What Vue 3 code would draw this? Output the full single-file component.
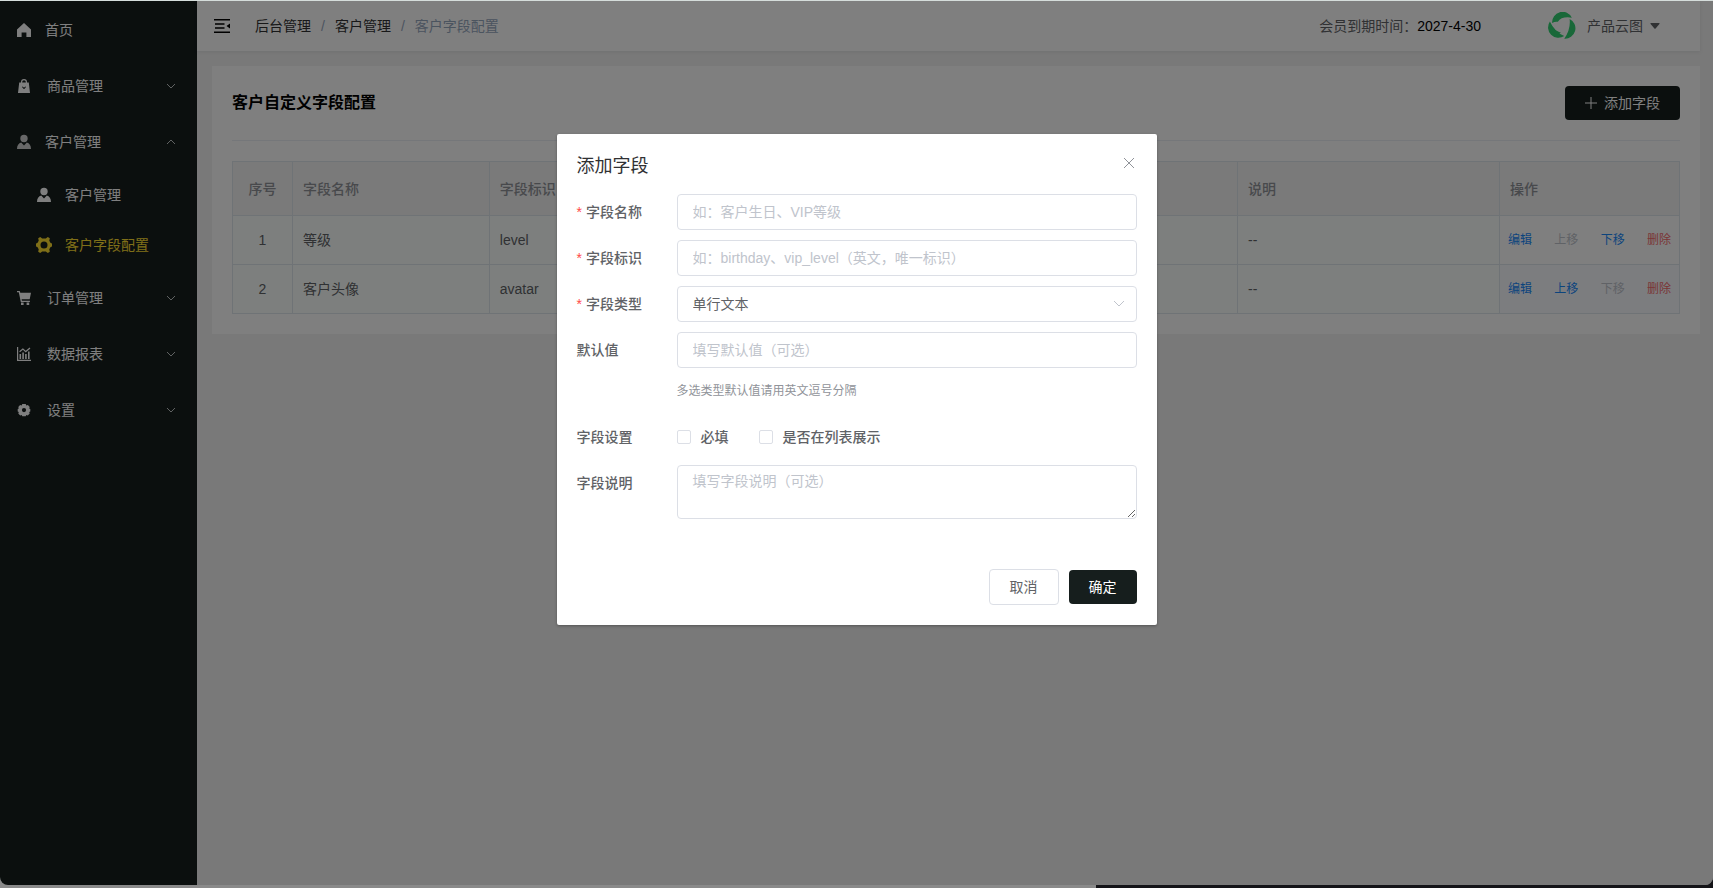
<script setup>
import { reactive, ref } from "vue";

const menus = [
  { name: "首页", icon: "home" },
  { name: "商品管理", icon: "bag", wide: true, arrow: true },
  {
    name: "客户管理",
    icon: "user",
    arrow: true,
    open: true,
    children: [
      { name: "客户管理", icon: "user" },
      { name: "客户字段配置", icon: "cog", active: true },
    ],
  },
  { name: "订单管理", icon: "cart", wide: true, arrow: true },
  { name: "数据报表", icon: "chart", wide: true, arrow: true },
  { name: "设置", icon: "gear", wide: true, arrow: true },
];

const icons = {
  home: "M8 1 1 7.4V15h4.6v-4.6h4.8V15H15V7.4z",
  bag: "M5 4.500V4a3 3 0 0 1 6 0v.5h1.800L14 15H2L3.200 4.500zM6.200 4.500h3.600V4a1.800 1.800 0 0 0-3.600 0zM6 9l2 2.200L10 9l-.7-.6L8 9.800 6.700 8.400z",
  user: "M8 .8a3.700 3.700 0 1 1 0 7.400 3.700 3.700 0 0 1 0-7.400zM5.200 8.600 8 11.500l2.800-2.900c2.600.7 4.200 3 4.200 6.400H1c0-3.400 1.600-5.700 4.200-6.400z",
  cog: "M4.200 0 6.200 1.600h3.600L11.800 0l2 1.200-.5 2.500 1.300 2.300 1.400.6v2.800l-1.400.6-1.300 2.300.5 2.500-2 1.200-2-1.600H6.200L4.200 16l-2-1.200.5-2.500L1.400 10 0 9.400V6.600L1.400 6l1.300-2.300-.5-2.500zM8 4.500a3.500 3.500 0 1 0 0 7 3.500 3.500 0 0 0 0-7z",
  cart: "M1 1h2.700l.6 1.800H15l-1.300 6.400H5.600l.3 1.500h8V12H4.800L2.800 2.300H1zM5 12.600h2.600V15H5zM10.600 12.600h2.600V15h-2.600z",
  chart: "M1 1h1.200v12.800H15V15H1zM3.500 8h1.600v5H3.500zM6.300 6.400h1.600V13H6.300zM9.100 8h1.600v5H9.100zM12 5.400h1.600V13H12zM3.200 5.200l3.700-3L9.700 4.800l3.900-3.300.8.900-4.700 4L6.900 3.800 4 6.200z",
  gear: "M6.300 2h3.400l.6 1.500 1.600-.4 1.800 1.900-.5 1.400 1.100.6v2.500l-1.100.6.5 1.400-1.900 1.900-1.500-.4-.6 1.300H6.300l-.6-1.300-1.500.4-1.900-1.900.5-1.400-1.100-.6V7l1.100-.6L2.300 5l1.800-1.900 1.600.4zM8 6a2.100 2.100 0 1 0 0 4.200A2.100 2.100 0 0 0 8 6z",
};

const rows = [
  { id: 1, name: "等级", key: "level", remark: "--" },
  { id: 2, name: "客户头像", key: "avatar", remark: "--" },
];

const dialogVisible = ref(true);
const form = reactive({
  name: "",
  key: "",
  type: "单行文本",
  defaultValue: "",
  required: false,
  showInList: false,
  remark: "",
});
</script>

<template>
  <div class="screen">
    <div class="window">
      <nav class="sidebar">
        <template v-for="menu in menus" :key="menu.name">
          <a href="#" class="menu-item" :class="{ wide: menu.wide, opened: menu.open }">
            <svg class="menu-icon" viewBox="0 0 16 16" aria-hidden="true">
              <path :d="icons[menu.icon]" fill-rule="evenodd" />
            </svg>
            <span>{{ menu.name }}</span>
            <svg v-if="menu.arrow" class="menu-arrow" viewBox="0 0 10 10" aria-hidden="true">
              <path :d="menu.open ? 'M1 7l4-4 4 4' : 'M1 3l4 4 4-4'" />
            </svg>
          </a>
          <a
            v-for="child in menu.children"
            :key="child.name"
            href="#"
            class="menu-item sub"
            :class="{ active: child.active }"
          >
            <svg class="menu-icon" viewBox="0 0 16 16" aria-hidden="true">
              <path :d="icons[child.icon]" fill-rule="evenodd" />
            </svg>
            <span>{{ child.name }}</span>
          </a>
        </template>
      </nav>

      <div class="main">
        <header class="navbar">
          <button class="fold" type="button" aria-label="menu">
            <svg viewBox="0 0 16 14" aria-hidden="true">
              <path d="M0 0h16v1.500H0zM1 4.200h9.500v1.500H1zM1 8.300h9.500v1.500H1zM0 12.500h16V14H0zM16 4.500v5L12.500 7z" />
            </svg>
          </button>
          <div class="breadcrumb">
            <a href="#">后台管理</a>
            <i>/</i>
            <a href="#">客户管理</a>
            <i>/</i>
            <span>客户字段配置</span>
          </div>
          <div class="expire">会员到期时间：<b>2027-4-30</b></div>
          <button class="account" type="button">
            <svg class="logo" viewBox="0 0 27 27" aria-hidden="true">
              <path d="M4 10.500A10 10 0 0 1 23 5.500Q13 4 9.500 9.500Q7 9 4 10.500z" />
              <path transform="rotate(120 13.500 13.500)" d="M4 10.500A10 10 0 0 1 23 5.500Q12 4.500 4 10.500z" />
              <path transform="rotate(240 13.500 13.500)" d="M4 10.500A10 10 0 0 1 23 5.500Q12 4.500 4 10.500z" />
              <path d="M6 17l1.500 5.500 5-2.500z" />
            </svg>
            <span>产品云图</span>
            <svg class="caret" viewBox="0 0 10 6" aria-hidden="true">
              <path d="M1 0h8q1 0 .4.900L5.600 5.500q-.6.700-1.200 0L.6.900Q0 0 1 0z" />
            </svg>
          </button>
        </header>

        <section class="card">
          <div class="card-header">
            <h1>客户自定义字段配置</h1>
            <button class="btn primary add" type="button" @click="dialogVisible = true">
              <svg viewBox="0 0 12 12" aria-hidden="true"><path d="M6 0v12M0 6h12" /></svg>
              添加字段
            </button>
          </div>
          <table>
            <colgroup>
              <col class="col-index" />
              <col class="col-name" />
              <col class="col-name" />
              <col />
              <col class="col-remark" />
              <col class="col-action" />
            </colgroup>
            <thead>
              <tr>
                <th class="center">序号</th>
                <th>字段名称</th>
                <th>字段标识</th>
                <th></th>
                <th>说明</th>
                <th>操作</th>
              </tr>
            </thead>
            <tbody>
              <tr v-for="(row, index) in rows" :key="row.id">
                <td class="center">{{ row.id }}</td>
                <td>{{ row.name }}</td>
                <td>{{ row.key }}</td>
                <td></td>
                <td>{{ row.remark }}</td>
                <td class="action-cell">
                  <div class="actions">
                    <button type="button">编辑</button>
                    <button type="button" :disabled="index === 0">上移</button>
                    <button type="button" :disabled="index === rows.length - 1">下移</button>
                    <button type="button" class="danger">删除</button>
                  </div>
                </td>
              </tr>
            </tbody>
          </table>
        </section>
      </div>

      <div v-if="dialogVisible" class="mask">
        <form class="dialog" role="dialog" aria-labelledby="dialog-title" @submit.prevent>
          <div class="dialog-header">
            <h2 id="dialog-title">添加字段</h2>
            <button class="close" type="button" aria-label="close" @click="dialogVisible = false">
              <svg viewBox="0 0 10 10" aria-hidden="true"><path d="M0 0l10 10M10 0L0 10" /></svg>
            </button>
          </div>

          <div class="form-item">
            <label class="label required" for="name">字段名称</label>
            <input id="name" v-model="form.name" class="control" type="text" placeholder="如：客户生日、VIP等级" />
          </div>
          <div class="form-item">
            <label class="label required" for="key">字段标识</label>
            <input id="key" v-model="form.key" class="control" type="text" placeholder="如：birthday、vip_level（英文，唯一标识）" />
          </div>
          <div class="form-item">
            <label class="label required" for="type">字段类型</label>
            <div class="select">
              <select id="type" v-model="form.type" class="control">
                <option>单行文本</option>
              </select>
              <svg viewBox="0 0 12 12" aria-hidden="true"><path d="M1 3l5 5 5-5" /></svg>
            </div>
          </div>
          <div class="form-item">
            <label class="label" for="default-value">默认值</label>
            <input id="default-value" v-model="form.defaultValue" class="control" type="text" placeholder="填写默认值（可选）" />
          </div>
          <p class="hint">多选类型默认值请用英文逗号分隔</p>
          <div class="form-item">
            <span class="label">字段设置</span>
            <div class="checks">
              <label><input v-model="form.required" type="checkbox" />必填</label>
              <label><input v-model="form.showInList" type="checkbox" />是否在列表展示</label>
            </div>
          </div>
          <div class="form-item">
            <label class="label" for="remark">字段说明</label>
            <textarea id="remark" v-model="form.remark" class="control" rows="2" placeholder="填写字段说明（可选）"></textarea>
          </div>

          <div class="dialog-footer">
            <button class="btn plain" type="button" @click="dialogVisible = false">取消</button>
            <button class="btn primary" type="submit">确定</button>
          </div>
        </form>
      </div>
    </div>
  </div>
</template>

<style>
body {
  margin: 0;
  font-family: "Liberation Sans", "Noto Sans CJK SC", sans-serif;
  font-size: 14px;
  line-height: 20px;
}
</style>

<style scoped>
* {
  box-sizing: border-box;
}

button,
input,
select,
textarea {
  font: inherit;
}

button {
  border: 0;
  background: none;
  padding: 0;
  cursor: pointer;
}

a {
  color: inherit;
  text-decoration: none;
}

.screen {
  height: 100vh;
  padding: 1px 0 3px;
  background:
    linear-gradient(#d5dddb, #d5dddb) top / 100% 1px no-repeat,
    linear-gradient(90deg, #8a8a8a 64%, #141418 64%);
}

.window {
  position: relative;
  display: flex;
  height: 100%;
  overflow: hidden;
  border-radius: 0 0 8px 8px;
  background: #f2f2f2;
}

/* Sidebar */
.sidebar {
  flex: none;
  width: 197px;
  padding-top: 1px;
  background: #161e1d;
  color: #fff;
}

.menu-item {
  display: flex;
  align-items: center;
  gap: 13px;
  height: 56px;
  padding: 0 21px 0 16px;
}

.menu-item.wide {
  gap: 15px;
}

.menu-item.sub {
  height: 50px;
  padding-left: 36px;
}

.menu-item.active {
  color: #ffdf30;
}

.menu-icon {
  width: 16px;
  height: 16px;
  fill: currentColor;
}

.opened .menu-icon {
  fill: #d0d0d0;
}

.menu-arrow {
  width: 10px;
  height: 10px;
  margin-left: auto;
  fill: none;
  stroke: #c0c4c4;
}

/* Top bar */
.main {
  flex: 1;
  min-width: 0;
  padding-right: 13px;
}

.navbar {
  display: flex;
  align-items: center;
  height: 50px;
  padding: 0 40px 0 17px;
  background: #fff;
  box-shadow: 0 1px 4px rgba(0, 21, 41, 0.08);
  color: #606266;
}

.fold svg {
  display: block;
  width: 16px;
  height: 14px;
}

.breadcrumb {
  display: flex;
  gap: 10px;
  margin: 0 auto 0 25px;
  color: #303133;
}

.breadcrumb span {
  color: #97a8be;
}

.breadcrumb i {
  color: #97a8be;
  font-style: normal;
}

.expire b {
  color: #000;
  font-weight: normal;
}

.account {
  display: flex;
  align-items: center;
  gap: 7px;
  margin-left: 67px;
  color: #606266;
}

.logo {
  width: 28px;
  height: 28px;
  margin-right: 4px;
  fill: #32d072;
}

.caret {
  width: 10px;
  height: 6px;
  fill: #606266;
}

/* Field list */
.card {
  margin: 15px 0 0 15px;
  padding: 20px;
  background: #fff;
}

.card-header {
  display: flex;
  align-items: center;
  justify-content: space-between;
  margin-bottom: 20px;
  padding-bottom: 20px;
  border-bottom: 1px solid #ebeef5;
}

h1 {
  margin: 0;
  font-size: 16px;
  font-weight: bold;
  line-height: 26px;
}

.btn {
  height: 34px;
  padding: 0 20px;
  border-radius: 4px;
}

.btn.primary {
  background: #161e1d;
  color: #fff;
}

.btn.plain {
  height: 36px;
  border: 1px solid #dcdfe6;
  color: #606266;
}

.btn.add {
  display: flex;
  align-items: center;
  gap: 7px;
}

.btn.add svg {
  width: 12px;
  height: 12px;
  stroke: #fff;
}

table {
  width: 100%;
  table-layout: fixed;
  border-collapse: collapse;
  color: #606266;
}

.col-index {
  width: 60px;
}

.col-name {
  width: 13.6%;
}

.col-remark {
  width: 18.1%;
}

.col-action {
  width: 180px;
}

th,
td {
  height: 49px;
  padding: 0 10px;
  border: 1px solid #dfe6ec;
  text-align: left;
}

th {
  height: 54px;
  background: #f4f4f4;
  color: #909399;
  font-weight: 500;
}

td {
  background: #fafffd;
}

.center {
  text-align: center;
}

.action-cell {
  padding: 0 8px;
  background: #fff;
}

tr:nth-child(even) .action-cell {
  background: #f8faff;
}

.actions {
  display: flex;
  justify-content: space-between;
}

.actions button {
  color: #1989fa;
  font-size: 12px;
}

.actions button:disabled {
  color: #c0c4cc;
}

.actions .danger {
  color: #f56c6c;
}

/* Dialog */
.mask {
  position: absolute;
  inset: 0;
  background: rgba(0, 0, 0, 0.5);
}

.dialog {
  width: 600px;
  max-width: 100%;
  margin: 15vh auto 50px;
  padding: 20px;
  border-radius: 2px;
  background: #fff;
  box-shadow: 0 1px 3px rgba(0, 0, 0, 0.3);
  color: #606266;
}

.dialog-header {
  display: flex;
  align-items: flex-start;
  justify-content: space-between;
  margin-bottom: 16px;
}

h2 {
  margin: 0;
  color: #303133;
  font-size: 18px;
  font-weight: normal;
  line-height: 24px;
}

.close {
  padding: 4px 3px;
}

.close svg {
  display: block;
  width: 10px;
  height: 10px;
  overflow: visible;
  stroke: #909399;
}

.form-item {
  display: flex;
  align-items: flex-start;
  margin-bottom: 10px;
}

.label {
  flex: none;
  width: 100px;
  font-weight: 500;
  line-height: 36px;
}

.required::before {
  content: "*";
  margin-right: 4px;
  color: #ff4949;
}

.control {
  width: 100%;
  height: 36px;
  padding: 0 15px;
  border: 1px solid #dcdfe6;
  border-radius: 4px;
  outline: 0;
  background: #fff;
  color: #606266;
}

.control::placeholder {
  color: #c0c4cc;
}

textarea.control {
  height: 54px;
  padding: 5px 15px;
  line-height: 21px;
  resize: vertical;
}

.select {
  position: relative;
  flex: 1;
}

select.control {
  display: block;
  appearance: none;
}

.select svg {
  position: absolute;
  top: 12px;
  right: 12px;
  width: 12px;
  height: 12px;
  fill: none;
  stroke: #c0c4cc;
  pointer-events: none;
}

.hint {
  margin: 0 0 15px 100px;
  color: #909399;
  font-size: 12px;
  line-height: 26px;
}

.checks {
  display: flex;
  gap: 30px;
  font-weight: 500;
  line-height: 36px;
}

.checks label {
  display: flex;
  align-items: center;
  gap: 10px;
}

.checks input {
  width: 14px;
  height: 14px;
  margin: 0;
  border: 1px solid #dcdfe6;
  border-radius: 2px;
  appearance: none;
}

.checks input:checked {
  background: #161e1d;
}

.dialog-footer {
  display: flex;
  align-items: center;
  justify-content: flex-end;
  gap: 10px;
  padding-top: 40px;
}
</style>
